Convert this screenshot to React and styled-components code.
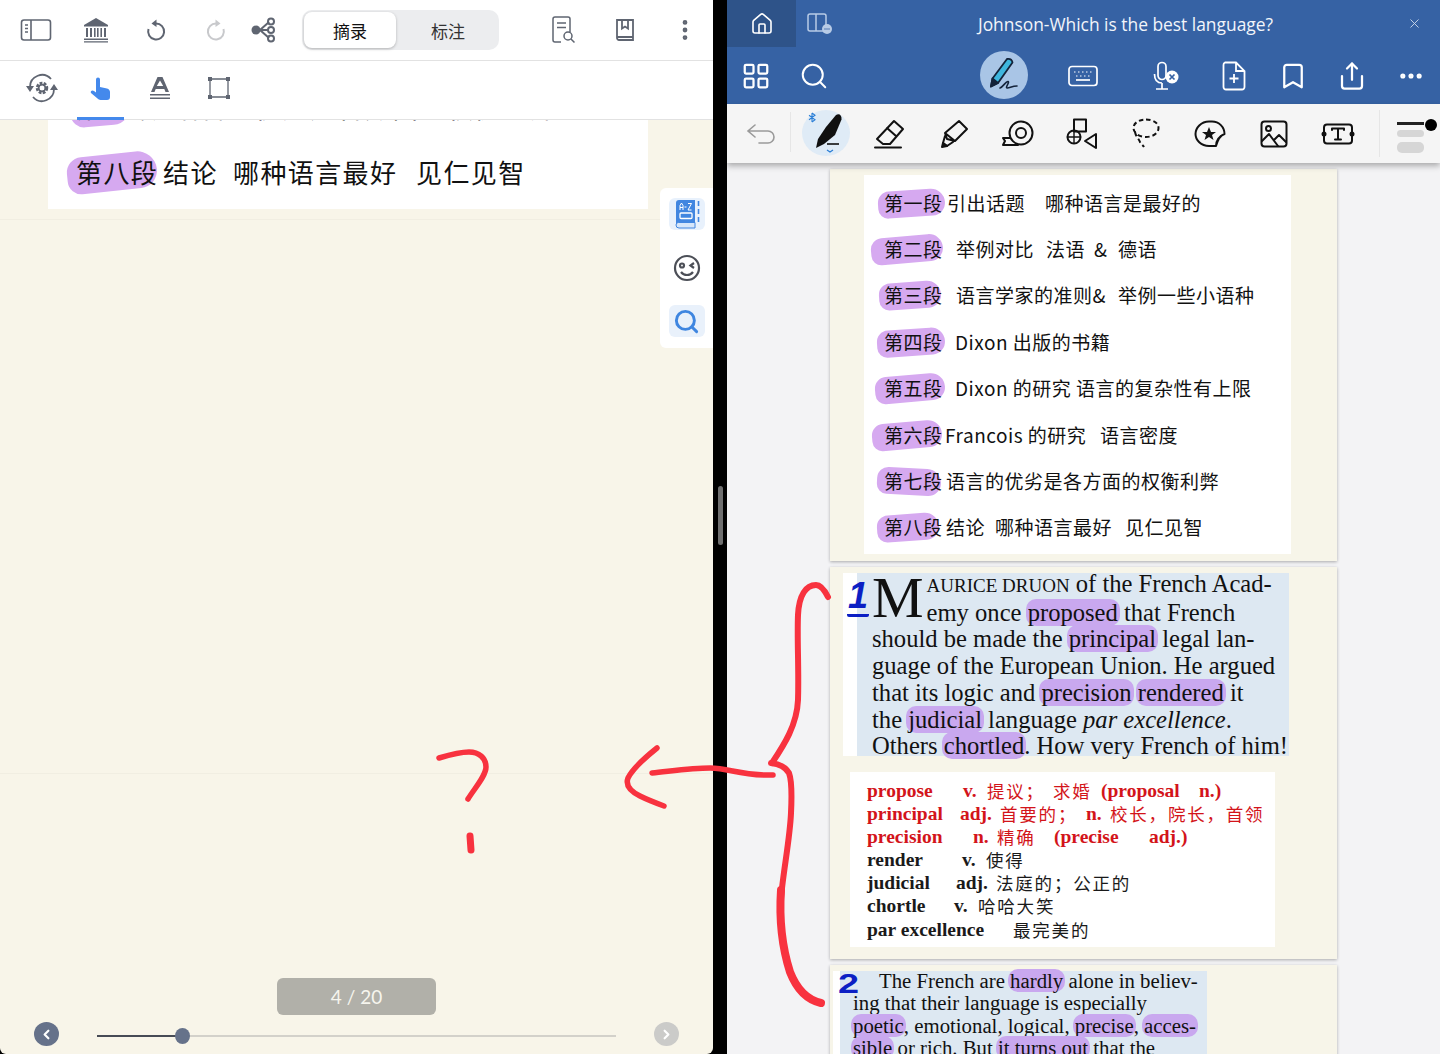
import React from "react";
import styled, { createGlobalStyle } from "styled-components";
import { Home, Search, LayoutGrid, Bookmark, Share, MoreHorizontal, MoreVertical, X, ChevronLeft, ChevronRight } from "lucide-react";

const GlobalStyle = createGlobalStyle`
html, body {
    margin: 0;
    padding: 0;
    overflow: hidden;
    background: #000;
    font-family: "Noto Sans CJK SC", "Noto Sans", sans-serif;
}
`;

const CJK = `"Noto Sans CJK SC", "Noto Sans", sans-serif`;
const SERIF = `"Liberation Serif", "Noto Sans CJK SC", serif`;
const GREY = "#5f6571";

const digest = [
    { label: "第一段", w: 63, blob: [-6, 1, -4], parts: [["引出话题", 98], ["哪种语言是最好的"]] },
    { label: "第二段", w: 72, blob: [-13, 3, -5], parts: [["举例对比", 90], ["法语", 48], ["&", 24], ["德语"]] },
    { label: "第三段", w: 72, blob: [-5, 5, -4], parts: [["语言学家的准则&", 162], ["举例一些小语种"]] },
    { label: "第四段", w: 71, blob: [-7, 1, -4], parts: [["Dixon 出版的书籍"]] },
    { label: "第五段", w: 71, blob: [-9, 1, -5], parts: [["Dixon 的研究", 121], ["语言的复杂性有上限"]] },
    { label: "第六段", w: 61, blob: [-12, 4, -5], parts: [["Francois 的研究", 155], ["语言密度"]] },
    { label: "第七段", w: 62, blob: [-7, 5, 3], parts: [["语言的优劣是各方面的权衡利弊"]] },
    { label: "第八段", w: 62, blob: [-7, 7, -4], parts: [["结论", 49], ["哪种语言最好", 130], ["见仁见智"]] },
];

const vocab = [
    { red: true, parts: [["propose", 96], ["v.", 24], ["提议；", 66, 1], ["求婚", 48, 1], ["(proposal", 98], ["n.)"]] },
    { red: true, parts: [["principal", 93], ["adj.", 40], ["首要的；", 86, 1], ["n.", 24], ["校长，院长，首领", 0, 1]] },
    { red: true, parts: [["precision", 106], ["n.", 24], ["精确", 57, 1], ["(precise", 95], ["adj.)"]] },
    { parts: [["render", 95], ["v.", 24], ["使得", 0, 1]] },
    { parts: [["judicial", 89], ["adj.", 40], ["法庭的；公正的", 0, 1]] },
    { parts: [["chortle", 87], ["v.", 24], ["哈哈大笑", 0, 1]] },
    { parts: [["par excellence", 146], ["最完美的", 0, 1]] },
];

const Sidebar = () => (
    <svg width="32" height="24" viewBox="0 0 32 24" fill="none" stroke={GREY} strokeWidth="1.6">
        <rect x="1.5" y="2" width="29" height="20" rx="2.5" />
        <path d="M11 2v20M5 7h3M5 10.5h3M5 14h3" />
    </svg>
);
const Bank = () => (
    <svg width="26" height="26" viewBox="0 0 26 26" fill={GREY}>
        <path d="M13 1 25 8v1.5H1V8z" />
        <path d="M3 11h2v9H3zM7 11h2v9H7zM11 11h1.6v9H11zM14 11h1.6v9H14zM17.4 11h1.6v9h-1.6zM21 11h2v9h-2z" />
        <path d="M1 21.5h24V23H1zM1 24.2h24v1.3H1z" />
    </svg>
);
const Turn = ({ flip, color = GREY }) => (
    <svg width="22" height="24" viewBox="0 0 22 24" fill="none" stroke={color} strokeWidth="2" style={flip ? { transform: "scaleX(-1)" } : undefined}>
        <path d="M11 5.5a8 8 0 1 1-7.5 5.5" />
        <path d="M11.5 1.5 6.5 5.5l5 3.5z" fill={color} stroke="none" />
    </svg>
);
const Branch = () => (
    <svg width="28" height="26" viewBox="0 0 28 26" fill="none" stroke={GREY} strokeWidth="2">
        <circle cx="6" cy="13" r="4.5" fill={GREY} stroke="none" />
        <path d="M10 13h8M10 13 19 5M10 13l9 8" />
        <circle cx="21" cy="4.5" r="3" />
        <circle cx="21" cy="13" r="3" />
        <circle cx="21" cy="21.5" r="3" />
    </svg>
);
const FileFind = () => (
    <svg width="24" height="28" viewBox="0 0 24 28" fill="none" stroke={GREY} strokeWidth="1.5">
        <path d="M9 26H3a2 2 0 0 1-2-2V3a2 2 0 0 1 2-2h13a2 2 0 0 1 2 2v13" />
        <path d="M5 7h9M5 11.5h9" />
        <circle cx="16" cy="20" r="4" />
        <path d="m19 23 3.5 3.5" />
    </svg>
);
const BookMark = () => (
    <svg width="20" height="24" viewBox="0 0 20 24" fill="none" stroke={GREY} strokeWidth="1.8">
        <path d="M2 19V2h16v20H4a2 2 0 0 1-2-2zM2 19h16" />
        <path d="M7 2v8.5l3-2 3 2V2" />
    </svg>
);
const GearCycle = () => (
    <svg width="34" height="30" viewBox="0 0 34 30" fill="none" stroke={GREY} strokeWidth="1.8">
        <path d="M5 14a12 12 0 0 1 21-8M29 16a12 12 0 0 1-21 8" />
        <path d="M1 13h8l-4 6zM25 17h8l-4-6z" fill={GREY} stroke="none" />
        <circle cx="17" cy="15" r="4.5" strokeWidth="3.5" strokeDasharray="2.5 1.2" />
        <circle cx="17" cy="15" r="3.4" strokeWidth="1.8" />
    </svg>
);
const Pointer = () => (
    <svg width="22" height="24" viewBox="0 0 22 24" fill="#4489ec">
        <path d="M8 1.5a2 2 0 0 1 2 2V11l7 1.5c2 .5 3 2 3 3.5v5a3 3 0 0 1-3 3h-6.5a4 4 0 0 1-3-1.500L1 17c-1-1.500 1-3.500 3-2l2 1.500V3.500a2 2 0 0 1 2-2z" />
    </svg>
);
const Letter = () => (
    <svg width="22" height="24" viewBox="0 0 22 24" fill={GREY}>
        <path d="M8.5 1h5L20 16h-3.5l-1.2-3H6.7l-1.2 3H2zM11 4.5 7.8 10h6.400z" fillRule="evenodd" />
        <path d="M1 18h20v1.5H1zM1 21.500h20V23H1z" />
    </svg>
);
const Crop = () => (
    <svg width="24" height="24" viewBox="0 0 24 24" fill={GREY}>
        <path d="M3 3h18v18H3z" fill="none" stroke={GREY} strokeWidth="1.3" />
        <path d="M1 1h4v4H1zM19 1h4v4h-4zM1 19h4v4H1zM19 19h4v4h-4z" />
    </svg>
);
const Glossary = () => (
    <svg width="30" height="32" viewBox="0 0 30 32">
        <path d="M4 5a3 3 0 0 1 3-3h16v25H4z" fill="#4186e0" />
        <path d="M4 27a2.500 2.500 0 0 1 2.500-2.500H23V30H7a3 3 0 0 1-3-3z" fill="#d6e6fa" stroke="#4186e0" />
        <rect x="8" y="15" width="12" height="5.5" rx="1" fill="none" stroke="#fff" strokeWidth="1.3" />
        <path d="M26.500 3v5M26.500 11v5M26.500 19v5" stroke="#4186e0" strokeWidth="1.6" />
        <path d="M8 12V7.500L9.500 5 11 7.500V12M8 9.500h3M12.500 9h2M16 5.500h3.500L16 12h3.500" fill="none" stroke="#fff" strokeWidth="1" />
    </svg>
);
const Wink = () => (
    <svg width="28" height="28" viewBox="0 0 28 28" fill="none" stroke="#4c4f57" strokeWidth="2.2">
        <circle cx="14" cy="14" r="12" />
        <circle cx="9" cy="11.5" r="2" />
        <path d="m21 9-3.500 2.500L21 14M8 18c3 4 9 4 12 0" />
    </svg>
);
const Pen = () => (
    <svg width="32" height="36" viewBox="0 0 32 36" fill="none" stroke="#14233a" strokeWidth="1.8" strokeLinejoin="round">
        <path d="M19 2c3-.500 5 1 5.500 3.500L10 26l-7 3.500 1.500-8z" fill="#3fb6de" />
        <path d="M4.500 21.500 10 26l-7 3.500z" fill="#14233a" />
        <path d="M12 31c3-1 6-7 8-6.500s-3 6-1 6.500 5-2 10-2" strokeWidth="1.6" strokeLinecap="round" />
    </svg>
);
const Keys = () => (
    <svg width="30" height="22" viewBox="0 0 30 22" fill="none" stroke="#fff" strokeWidth="1.7">
        <rect x="1" y="1.5" width="28" height="19" rx="3" />
        <path d="M8 15h14" />
        <path d="M6 7h1.500M10 7h1.500M14 7h1.500M18 7h1.500M22 7h1.500M8 11h1.500M12 11h1.500M16 11h1.500M20 11h1.500" strokeWidth="1.2" />
    </svg>
);
const MicOff = () => (
    <svg width="30" height="30" viewBox="0 0 30 30" fill="none" stroke="#fff" strokeWidth="1.7">
        <rect x="6" y="1.5" width="8" height="17" rx="4" />
        <path d="M2.500 13c0 6 3 9 7.500 9 M10 22v6M4 28h12" />
        <circle cx="20" cy="16" r="6.5" fill="#fff" stroke="none" />
        <path d="m17.500 13.500 5 5M22.500 13.500l-5 5" stroke="#3662a4" />
    </svg>
);
const FilePlus = () => (
    <svg width="24" height="30" viewBox="0 0 24 30" fill="none" stroke="#fff" strokeWidth="1.8">
        <path d="M3 1.500h11l8.500 8.500v16a2.500 2.500 0 0 1-2.500 2.500H4A2.500 2.500 0 0 1 1.500 26V4A2.500 2.500 0 0 1 3 1.500zM14 1.500V10h8.500M12 13v9M7.500 17.500h9" />
    </svg>
);
const TabsIcon = () => (
    <svg width="26" height="22" viewBox="0 0 26 22" fill="none" stroke="#b8cbe6" strokeWidth="1.5">
        <rect x="1" y="1" width="18" height="17" rx="2" />
        <path d="M9 1v17" />
        <circle cx="20" cy="16" r="5" fill="#b8cbe6" stroke="none" />
        <path d="M17.500 16h5" stroke="#3662a4" strokeDasharray="1 1" />
    </svg>
);
const Stylus = () => (
    <svg width="40" height="44" viewBox="0 0 40 44" fill="none">
        <path d="M30 4c3-2 6 0 5.500 4.500L29 24l-11 9-8 4 2-9 8-12z" fill="#101010" />
        <path d="M21 33h12" stroke="#101010" strokeWidth="1.6" />
        <path d="M21 39l3 2 3-2" stroke="#2c7fd6" strokeWidth="1.3" />
        <path d="M6 2v9M6 2l3 2.200-6 4.500M6 11l3-2.200-6-4.500" stroke="#2c7fd6" strokeWidth="1.1" />
    </svg>
);
const toolStroke = { fill: "none", stroke: "#111", strokeWidth: 2, strokeLinejoin: "round", strokeLinecap: "round" };
const Eraser = () => (
    <svg width="32" height="30" viewBox="0 0 32 30" {...toolStroke}>
        <path d="m20 2 9 8-13 15H9l-6-5zM13 9l9 8M1 28.500h26" />
    </svg>
);
const Marker = () => (
    <svg width="30" height="30" viewBox="0 0 30 30" {...toolStroke}>
        <path d="m20 2 8 8-12 12-8-2-2-6zM6 14l10 8M6 17l-2 7 4 3 6-4" />
        <path d="m4 24 4 3-5 1z" fill="#111" />
    </svg>
);
const Tape = () => (
    <svg width="32" height="28" viewBox="0 0 32 28" {...toolStroke}>
        <circle cx="19" cy="13" r="11.5" />
        <circle cx="19" cy="13" r="5" />
        <path d="M16 25H1l2-4-2-3h7" />
    </svg>
);
const Shapes = () => (
    <svg width="32" height="32" viewBox="0 0 32 32" {...toolStroke}>
        <path d="M8 1.500h12v12H8z" />
        <circle cx="8" cy="19" r="6.5" />
        <path d="M30 16v14l-11-7z" />
        <path d="M1.500 19h13M8 13v12" strokeWidth="1.4" />
    </svg>
);
const Lasso = () => (
    <svg width="28" height="32" viewBox="0 0 28 32" fill="none" stroke="#111" strokeWidth="2" strokeLinecap="butt" strokeDasharray="4.5 3">
        <path d="M14 1.500c7 0 12.500 3.500 12.500 8.500S21 19 14 19 1.500 15 1.500 10 7 1.500 14 1.500zM3 14c1 5 4 7 5 10 .7 2 3 3 4 5" />
    </svg>
);
const Sticker = () => (
    <svg width="32" height="28" viewBox="0 0 32 28" {...toolStroke}>
        <path d="M22 26H15C7 26 1.500 20 1.500 14S7 1.500 15 1.500h3C25 1.500 30.500 7 30.500 14 27 15 24 19 22 26zM22 26c0-5 3-10 8.500-12" />
        <path d="m15 7 2 5h5l-4 3 1.500 5-4.500-3-4.500 3 1.500-5-4-3h5z" fill="#111" stroke="none" />
    </svg>
);
const Picture = () => (
    <svg width="28" height="28" viewBox="0 0 28 28" {...toolStroke}>
        <rect x="1.5" y="1.5" width="25" height="25" rx="3" />
        <circle cx="8.5" cy="8.5" r="2.5" />
        <path d="m2 21 7-7 9 12M14 20l5-5 7 7" />
    </svg>
);
const TextBox = () => (
    <svg width="34" height="22" viewBox="0 0 34 22" {...toolStroke}>
        <rect x="3" y="1.5" width="28" height="19" rx="3" />
        <path d="M11 7V5.500h12V7M17 5.500v11M14 16.500h6" />
        <circle cx="3" cy="11" r="2.5" fill="#111" stroke="none" />
        <circle cx="31" cy="11" r="2.5" fill="#111" stroke="none" />
    </svg>
);
const BackArrow = () => (
    <svg width="30" height="22" viewBox="0 0 30 22" fill="none" stroke="#9a9a9a" strokeWidth="1.6" strokeLinecap="round">
        <path d="M9 2 2 8l7 6M2 8h20a6 6 0 0 1 0 12h-9" />
    </svg>
);

const Digest = ({ rows }) => rows.map((r) => (
    <DigestRow key={r.label}>
        <Label $w={r.w} $l={r.blob[0]} $r={r.blob[1]} $rot={r.blob[2]}><b>{r.label}</b></Label>
        {r.parts.map(([t, w]) => <Part key={t} $w={w}>{t}</Part>)}
    </DigestRow>
));

const App = () => {
    return (
        <Screen>
            <GlobalStyle />
            <LeftPane>
                <TopBar>
                    <Slot $w={60}><Sidebar /></Slot>
                    <Slot $w={60}><Bank /></Slot>
                    <Slot $w={60}><Turn /></Slot>
                    <Slot $w={60}><Turn flip color="#c8c9cc" /></Slot>
                    <Slot $w={36}><Branch /></Slot>
                    <Segments>
                        <Segment $on>摘录</Segment>
                        <Segment>标注</Segment>
                    </Segments>
                    <Slot $w={60}><FileFind /></Slot>
                    <Slot $w={61}><BookMark /></Slot>
                    <Slot $w={60}><MoreVertical size={26} color={GREY} strokeWidth={2.4} /></Slot>
                </TopBar>
                <ModeBar>
                    <Mode><GearCycle /></Mode>
                    <Mode $on><Pointer /></Mode>
                    <Mode><Letter /></Mode>
                    <Mode><Crop /></Mode>
                </ModeBar>
                <LeftDoc>
                    <SeamPage $h={99}>
                        <LeftCard>
                            <ClippedRow>
                                <Label $w={97} $l={-6} $r={8} $rot={-5}><b>第七段</b></Label>
                                <Part>语言的优劣是各方面的权衡利弊</Part>
                            </ClippedRow>
                            <BigRow>
                                <Label $w={87} $l={-9} $r={-19} $rot={-6}><b>第八段</b></Label>
                                <Part $w={70}>结论</Part>
                                <Part $w={183}>哪种语言最好</Part>
                                <Part>见仁见智</Part>
                            </BigRow>
                        </LeftCard>
                    </SeamPage>
                    <SeamPage $h={553} />
                    <Footer>
                        <Pager>4 / 20</Pager>
                        <SliderRow>
                            <RoundBtn $on><ChevronLeft size={15} strokeWidth={3.5} /></RoundBtn>
                            <Track>
                                <TrackFill style={{ width: `${(85 / 519) * 100}%` }} />
                                <Thumb style={{ left: `${(85 / 519) * 100}%` }} />
                            </Track>
                            <RoundBtn><ChevronRight size={15} strokeWidth={3.5} /></RoundBtn>
                        </SliderRow>
                    </Footer>
                </LeftDoc>
                <FloatTools>
                    <FloatBtn $tint="#e8f1fc"><Glossary /></FloatBtn>
                    <FloatBtn><Wink /></FloatBtn>
                    <FloatBtn $tint="#e9f1fb"><Search size={27} color="#3f86e0" strokeWidth={2.6} /></FloatBtn>
                </FloatTools>
            </LeftPane>

            <Divider><Grip /></Divider>

            <RightPane>
                <TitleBar>
                    <HomeTab><Home size={24} strokeWidth={1.6} /></HomeTab>
                    <Slot $w={48}><TabsIcon /></Slot>
                    <DocTitle>Johnson-Which is the best language?</DocTitle>
                    <CloseBtn><X size={15} strokeWidth={1.5} /></CloseBtn>
                </TitleBar>
                <MainBar>
                    <Slot $w={58}><LayoutGrid size={30} strokeWidth={1.8} /></Slot>
                    <Slot $w={58}><Search size={30} strokeWidth={1.6} /></Slot>
                    <ActivePen><Pen /></ActivePen>
                    <Slot $w={110}><Keys /></Slot>
                    <Slot $w={58}><MicOff /></Slot>
                    <Slot $w={76}><FilePlus /></Slot>
                    <Slot $w={42}><Bookmark size={30} strokeWidth={1.8} /></Slot>
                    <Slot $w={76}><Share size={30} strokeWidth={1.8} /></Slot>
                    <Slot $w={42}><MoreHorizontal size={28} strokeWidth={2.4} /></Slot>
                </MainBar>
                <ToolRow>
                    <BackSlot $w={63}><BackArrow /></BackSlot>
                    <ActiveTool><Stylus /></ActiveTool>
                    <Tools>
                        <Slot $w={64}><Eraser /></Slot>
                        <Slot $w={64}><Marker /></Slot>
                        <Slot $w={64}><Tape /></Slot>
                        <Slot $w={64}><Shapes /></Slot>
                        <Slot $w={64}><Lasso /></Slot>
                        <Slot $w={64}><Sticker /></Slot>
                        <Slot $w={64}><Picture /></Slot>
                        <Slot $w={64}><TextBox /></Slot>
                    </Tools>
                    <Widths>
                        <WidthLine />
                        <WidthPill $h={7} />
                        <WidthPill $h={11} />
                        <WidthDot />
                    </Widths>
                </ToolRow>
                <DocArea>
                    <Page>
                        <DigestCard><Digest rows={digest} /></DigestCard>
                    </Page>
                    <Page>
                        <BlueCard>
                            <Numeral>1</Numeral>
                            <Flow>
                                <DropCap>M</DropCap>
                                <Line><SmallCaps>AURICE DRUON</SmallCaps> of the French Acad-</Line>
                                <Line>emy once <Hl>proposed</Hl> that French</Line>
                                <Line>should be made the <Hl>principal</Hl> legal lan-</Line>
                                <Line>guage of the European Union. He argued</Line>
                                <Line>that its logic and <Hl>precision</Hl> <Hl>rendered</Hl> it</Line>
                                <Line>the <Hl>judicial</Hl> language <i>par excellence</i>.</Line>
                                <Line>Others <Hl>chortled</Hl>. How very French of him!</Line>
                            </Flow>
                        </BlueCard>
                        <VocabCard>
                            {vocab.map((v) => (
                                <VocabRow key={v.parts[0][0]} $red={v.red}>
                                    {v.parts.map(([t, w, zh]) => <VocabPart key={t} $w={w} $zh={zh}>{t}</VocabPart>)}
                                </VocabRow>
                            ))}
                        </VocabCard>
                    </Page>
                    <Page>
                        <SmallBlue>
                            <SmallNumeral>2</SmallNumeral>
                            <SmallFlow>
                                <SmallLine $indent>The French are <Hl>hardly</Hl> alone in believ-</SmallLine>
                                <SmallLine>ing that their language is especially</SmallLine>
                                <SmallLine><Hl>poetic</Hl>, emotional, logical, <Hl>precise</Hl>, <Hl>acces-</Hl></SmallLine>
                                <SmallLine><Hl>sible</Hl> or rich. But <Hl>it turns out</Hl> that the</SmallLine>
                            </SmallFlow>
                        </SmallBlue>
                    </Page>
                </DocArea>
            </RightPane>

            <Ink viewBox="0 0 1440 1054" fill="none" stroke="#f8323f" strokeWidth="5.5" strokeLinecap="round" strokeLinejoin="round">
                <path d="M439 758c10-3 20-6 30-6 10 0 17 6 17 15 0 9-12 22-18 32" />
                <path d="M470 836l1 14" strokeWidth="7" />
                <path d="M657 748c-10 8-24 20-29 30-3 8 4 14 12 18 8 4 16 7 24 10" />
                <path d="M652 773c20-2 40-5 58-5 20 0 30 8 63 7" />
                <path d="M828 597c-3-6-7-12-12-12-10 0-17 10-18 30-1 25 1 55 0 85-1 25-14 45-26 63" strokeWidth="6" />
                <path d="M771 763c8 1 14 3 18 10 3 8 3 20 2 40-1 25-8 60-10 85" strokeWidth="6" />
                <path d="M781 890c-2 30 2 60 9 82 7 18 18 28 31 31" strokeWidth="8" />
            </Ink>
        </Screen>
    );
};
export default App;

const Screen = styled.div`
position: relative;
display: flex;
width: 1440px;
height: 1054px;
overflow: hidden;
`;
const Ink = styled.svg`
position: absolute;
inset: 0;
width: 1440px;
height: 1054px;
pointer-events: none;
`;
const Slot = styled.div`
flex: none;
box-sizing: border-box;
width: ${(p) => p.$w}px;
height: 100%;
display: flex;
align-items: center;
justify-content: center;
`;
const BackSlot = styled(Slot)`
padding-left: 5px;
`;
const LeftPane = styled.div`
position: relative;
flex: none;
width: 713px;
height: 100%;
display: flex;
flex-direction: column;
background: #f8f5e9;
border-radius: 0 0 6px 6px;
overflow: hidden;
`;
const TopBar = styled.div`
flex: none;
height: 61px;
box-sizing: border-box;
padding-left: 6px;
display: flex;
align-items: center;
background: #fff;
border-bottom: 1px solid #e2e2e2;
`;
const Segments = styled.div`
flex: none;
box-sizing: border-box;
width: 197px;
height: 40px;
margin: 0 35px 0 20px;
padding: 2px;
display: flex;
background: #ecedef;
border-radius: 10px;
`;
const Segment = styled.div`
flex: none;
width: 92px;
display: flex;
align-items: center;
justify-content: center;
margin-right: 6px;
font-size: 17px;
color: ${(p) => (p.$on ? "#111" : "#333")};
background: ${(p) => (p.$on ? "#fff" : "transparent")};
border-radius: 8px;
box-shadow: ${(p) => (p.$on ? "0 1px 3px rgba(0,0,0,.25)" : "none")};
`;
const ModeBar = styled.div`
flex: none;
height: 59px;
box-sizing: border-box;
padding-left: 18px;
display: flex;
background: #fff;
border-bottom: 1px solid #e2e2e2;
`;
const Mode = styled.div`
flex: none;
position: relative;
width: 47px;
margin-right: 12px;
display: flex;
align-items: center;
justify-content: center;
padding-bottom: 2px;
border-bottom: 3px solid ${(p) => (p.$on ? "#4489ec" : "transparent")};
margin-bottom: -1px;
`;
const LeftDoc = styled.div`
flex: 1;
min-height: 0;
display: flex;
flex-direction: column;
`;
const SeamPage = styled.div`
flex: none;
height: ${(p) => p.$h}px;
border-bottom: 1px solid #f1eee2;
`;
const LeftCard = styled.div`
width: 600px;
height: 89px;
margin-left: 48px;
padding-left: 28px;
box-sizing: border-box;
background: #fff;
overflow: hidden;
font-family: ${CJK};
color: #111;
`;
const Label = styled.span`
position: relative;
flex: none;
width: ${(p) => p.$w}px;
b {
    position: relative;
    font-weight: 400;
}
&::before {
    content: "";
    position: absolute;
    top: 1px;
    bottom: -1px;
    left: ${(p) => p.$l}px;
    right: ${(p) => p.$r + (p.$w - 62)}px;
    background: #d6a9f0;
    border-radius: 16px 20px 18px 14px;
    transform: rotate(${(p) => p.$rot}deg);
}
`;
const Part = styled.span`
flex: none;
${(p) => (p.$w ? `width: ${p.$w}px;` : "")}
position: relative;
`;
const BigRow = styled.div`
display: flex;
align-items: center;
height: 36px;
margin-top: 29px;
font-size: 26px;
letter-spacing: 1.4px;
white-space: nowrap;
`;
const ClippedRow = styled(BigRow)`
margin-top: -32px;
`;
const Footer = styled.div`
flex: 1;
display: flex;
flex-direction: column;
align-items: center;
`;
const Pager = styled.div`
margin-top: 204px;
width: 159px;
height: 37px;
display: flex;
align-items: center;
justify-content: center;
background: #b1b0a9;
border-radius: 6px;
color: #f6f5ee;
font-family: "Lato", sans-serif;
font-size: 19px;
`;
const SliderRow = styled.div`
align-self: stretch;
margin-top: 7px;
padding: 0 34px;
display: flex;
align-items: center;
justify-content: space-between;
`;
const RoundBtn = styled.div`
flex: none;
width: 25px;
height: 24px;
border-radius: 50%;
display: flex;
align-items: center;
justify-content: center;
color: #fff;
background: ${(p) => (p.$on ? "#66728a" : "#cbcbc9")};
`;
const Track = styled.div`
position: relative;
width: 519px;
height: 2px;
margin-top: 3px;
background: #d3d1ca;
`;
const TrackFill = styled.div`
height: 100%;
background: #474b55;
`;
const Thumb = styled.div`
position: absolute;
top: -7px;
width: 15px;
height: 16px;
margin-left: -7px;
border-radius: 50%;
background: #66728a;
`;
const FloatTools = styled.div`
position: absolute;
top: 188px;
left: 660px;
width: 53px;
height: 160px;
box-sizing: border-box;
padding: 10px 0 11px;
display: flex;
flex-direction: column;
align-items: center;
justify-content: space-between;
background: #fff;
border-radius: 6px 0 0 6px;
`;
const FloatBtn = styled.div`
width: 36px;
height: 32px;
display: flex;
align-items: center;
justify-content: center;
background: ${(p) => p.$tint || "transparent"};
border-radius: 6px;
`;
const Divider = styled.div`
flex: none;
width: 14px;
height: 100%;
background: #000;
display: flex;
align-items: center;
justify-content: center;
`;
const Grip = styled.div`
width: 5px;
height: 59px;
margin-top: -24px;
border-radius: 3px;
background: #6f6f6f;
`;
const RightPane = styled.div`
flex: 1;
min-width: 0;
display: flex;
flex-direction: column;
background: #f3f3f5;
`;
const TitleBar = styled.div`
position: relative;
flex: none;
height: 47px;
display: flex;
background: #3662a4;
color: #fff;
`;
const HomeTab = styled.div`
flex: none;
width: 69px;
display: flex;
align-items: center;
justify-content: center;
background: #2e5389;
`;
const DocTitle = styled.div`
flex: 1;
display: flex;
align-items: center;
justify-content: center;
margin-right: -19px;
font-family: "Open Sans", sans-serif;
font-size: 17.4px;
color: #f2f5fa;
`;
const CloseBtn = styled.div`
flex: none;
width: 52px;
display: flex;
align-items: center;
justify-content: center;
color: #c9d6ea;
`;
const MainBar = styled.div`
flex: none;
height: 57px;
display: flex;
background: #3662a4;
color: #fff;
`;
const ActivePen = styled.div`
flex: none;
width: 48px;
height: 48px;
margin: 4px 0 0 137px;
display: flex;
align-items: center;
justify-content: center;
border-radius: 50%;
background: #a9c5e6;
`;
const ToolRow = styled.div`
position: relative;
z-index: 2;
flex: none;
height: 59px;
display: flex;
background: #f5f5f5;
box-shadow: 0 3px 6px rgba(0,0,0,.3);
`;
const ActiveTool = styled.div`
flex: none;
width: 48px;
height: 46px;
margin: 6px 8px 0 12px;
display: flex;
align-items: center;
justify-content: center;
border-radius: 50%;
background: #dfebf6;
position: relative;
&::before {
    content: "";
    position: absolute;
    left: -12px;
    top: 2px;
    bottom: 4px;
    border-left: 1px solid #e6e6e6;
}
`;
const Tools = styled.div`
display: flex;
`;
const Widths = styled.div`
position: relative;
flex: none;
width: 70px;
padding: 18px 0 0 27px;
box-sizing: border-box;
display: flex;
flex-direction: column;
&::before {
    content: "";
    position: absolute;
    left: 9px;
    top: 6px;
    bottom: 6px;
    border-left: 1px solid #e6e6e6;
}
`;
const WidthLine = styled.div`
width: 27px;
height: 3px;
background: #222;
`;
const WidthPill = styled.div`
width: 27px;
height: ${(p) => p.$h}px;
margin-top: 5px;
border-radius: 5px;
background: #d6d6d6;
`;
const WidthDot = styled.div`
position: absolute;
top: 15px;
left: 55px;
width: 12px;
height: 12px;
border-radius: 50%;
background: #000;
`;
const DocArea = styled.div`
flex: 1;
min-height: 0;
overflow: hidden;
padding: 6px 0 0 103px;
`;
const Page = styled.div`
box-sizing: border-box;
width: 507px;
height: 392px;
margin-bottom: 6px;
padding-top: 6px;
background: #f7f5e9;
box-shadow: 0 1px 3px rgba(0,0,0,.3);
`;
const DigestCard = styled.div`
box-sizing: border-box;
width: 427px;
height: 379px;
margin-left: 34px;
padding: 4px 0 0 20px;
background: #fff;
color: #111;
`;
const DigestRow = styled.div`
display: flex;
align-items: center;
height: 46.4px;
font-size: 19px;
letter-spacing: 0.5px;
white-space: nowrap;
`;
const BlueCard = styled.div`
position: relative;
display: flow-root;
box-sizing: border-box;
width: 446px;
height: 183px;
margin-left: 13px;
padding-left: 15px;
background: #dde8f2;
border-left: 14px solid #fff;
font-family: ${SERIF};
font-size: 24.6px;
color: #111;
`;
const Flow = styled.div`
margin-top: -2px;
`;
const SmallFlow = styled.div`
margin-top: -1px;
`;
const Numeral = styled.span`
position: absolute;
left: -10px;
top: 5px;
width: 22px;
text-align: center;
font-family: "Liberation Sans", sans-serif;
font-style: italic;
font-weight: 700;
font-size: 36px;
line-height: 36px;
color: #0b1fc4;
border-bottom: 3px solid #0b1fc4;
border-radius: 2px;
`;
const DropCap = styled.span`
float: left;
font-size: 58px;
line-height: 53px;
margin-right: 3px;
height: 53px;
`;
const Line = styled.div`
line-height: 26.7px;
white-space: nowrap;
`;
const SmallCaps = styled.span`
font-size: 19px;
`;
const Hl = styled.span`
background: #c9a8ef;
border-radius: 10px;
padding: 0 2px;
margin: 0 -2px;
`;
const VocabCard = styled.div`
box-sizing: border-box;
width: 425px;
height: 175px;
margin: 16px 0 0 20px;
padding: 7px 0 0 17px;
background: #fff;
font-family: ${SERIF};
font-size: 19.5px;
font-weight: 700;
`;
const VocabRow = styled.div`
display: flex;
height: 23.1px;
line-height: 23.1px;
white-space: nowrap;
color: ${(p) => (p.$red ? "#d3141a" : "#1a1a1a")};
`;
const VocabPart = styled.span`
flex: none;
${(p) => (p.$w ? `width: ${p.$w}px;` : "")}
${(p) => (p.$zh ? `font-weight: 400; font-family: ${CJK}; font-size: 17.5px; letter-spacing: 1.8px;` : "")}
`;
const SmallBlue = styled.div`
position: relative;
display: flow-root;
box-sizing: border-box;
width: 374px;
height: 120px;
margin-left: 3px;
padding-left: 13px;
background: #dde8f2;
border-left: 7px solid #fff;
font-family: ${SERIF};
font-size: 20.8px;
color: #111;
`;
const SmallNumeral = styled.span`
position: absolute;
left: -2px;
top: 2px;
font-family: "Liberation Sans", sans-serif;
font-weight: 700;
font-size: 27px;
line-height: 23px;
color: #0b1fc4;
transform: scaleX(1.4);
transform-origin: left;
`;
const SmallLine = styled.div`
line-height: 22.4px;
white-space: nowrap;
padding-left: ${(p) => (p.$indent ? 26 : 0)}px;
`;
